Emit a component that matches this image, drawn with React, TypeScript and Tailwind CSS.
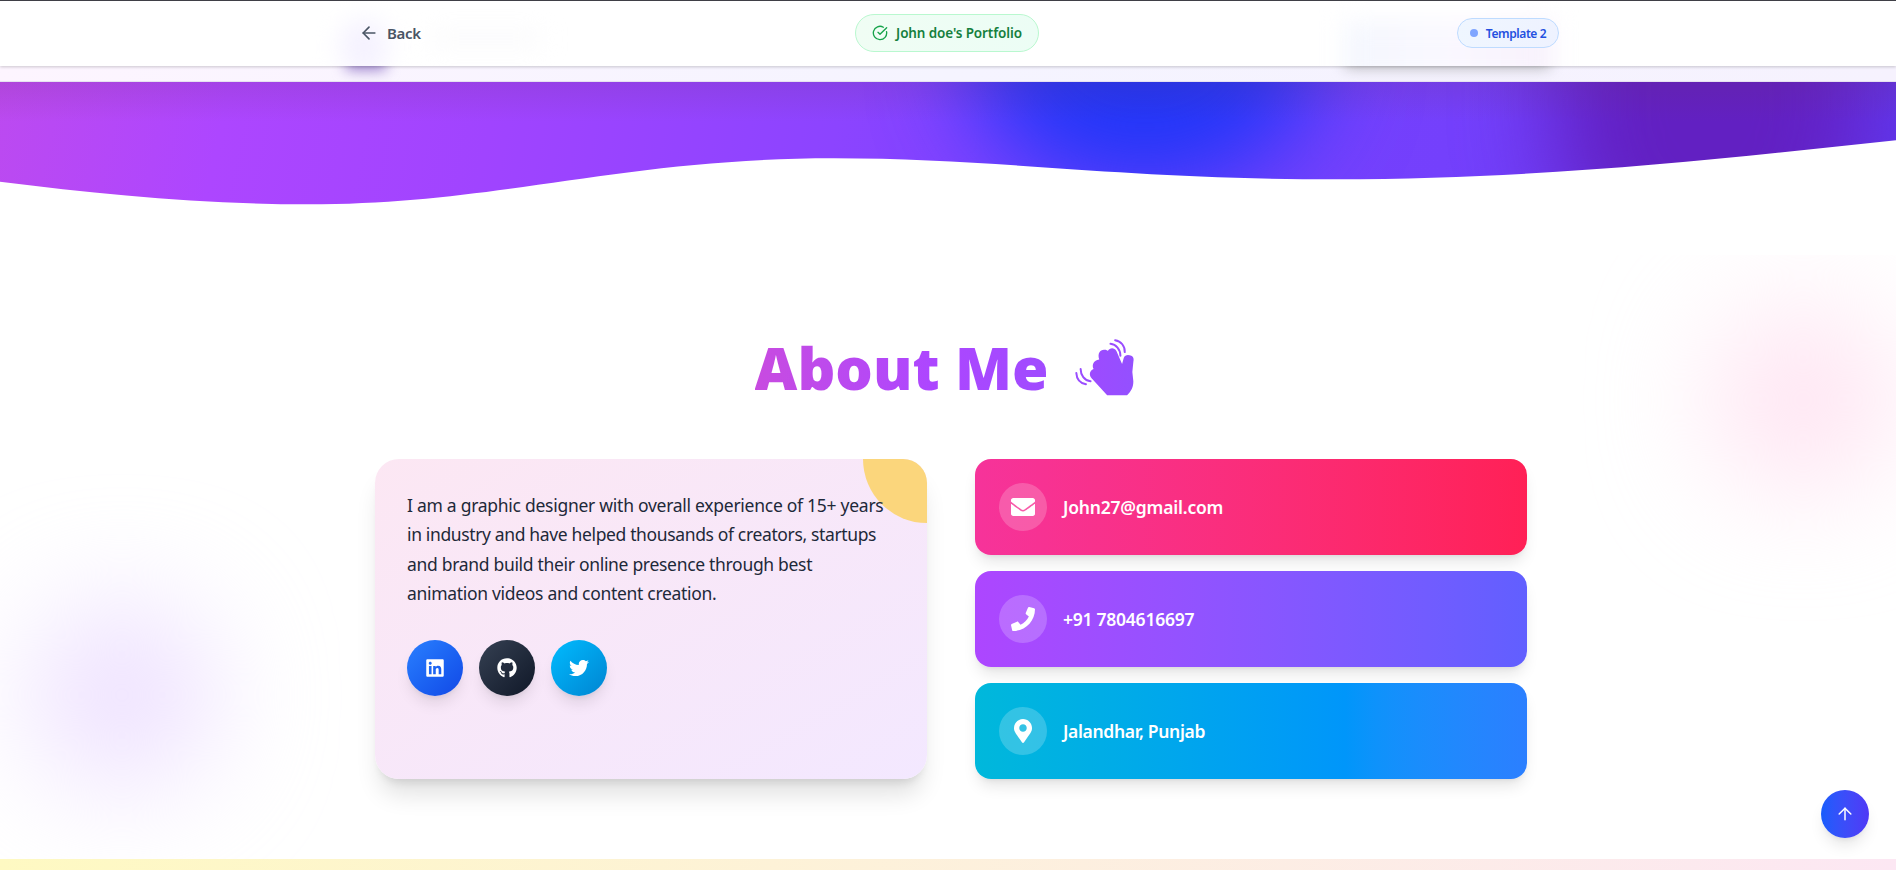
import React from "react";
import { ArrowLeft, ArrowUp, CircleCheckBig } from "lucide-react";
import { FaEnvelope, FaGithub, FaLinkedin, FaMapMarkerAlt, FaPhone, FaTwitter } from "react-icons/fa";

const socials = [
  { name: "LinkedIn", Icon: FaLinkedin, tone: "from-[#2b7fff] to-[#1447e6]" },
  { name: "GitHub", Icon: FaGithub, tone: "from-[#364153] to-[#101828]" },
  { name: "Twitter", Icon: FaTwitter, tone: "from-[#00bcff] to-[#0084d1]" },
];

const contacts = [
  { text: "John27@gmail.com", Icon: FaEnvelope, tone: "from-[#f6339a] to-[#ff2056]", tracking: "tracking-[-0.2px]" },
  { text: "+91 7804616697", Icon: FaPhone, tone: "from-[#ad46ff] to-[#615fff]", tracking: "tracking-[-0.25px]" },
  { text: "Jalandhar, Punjab", Icon: FaMapMarkerAlt, tone: "from-[#00b8db] via-[#0096fa] via-67% to-[#2b7fff]", tracking: "tracking-[-0.34px]" },
];

function Header() {
  return (
    <header className="relative z-20 h-[66px] border-t border-[#3f3f46] bg-white shadow-[0_1px_3px_rgba(0,0,0,0.2)]">
      <div className="pointer-events-none absolute inset-0 overflow-hidden">
        <div className="absolute left-[340px] top-[18px] h-14 w-12 rounded-full bg-[#f3efff]/80 blur-md" />
        <div className="absolute left-[430px] top-[34px] h-2 w-28 bg-[#f6f6f8] blur-md" />
        <div className="absolute left-[1345px] top-[20px] h-16 w-[208px] bg-linear-to-r from-[#f4f7fe] via-[#faf8ff] to-[#f8f1fc] blur-md" />
      </div>
      <div className="relative mx-auto grid h-full w-[1222px] grid-cols-3 items-center pb-0.5">
        <button className="ml-[22px] flex items-center gap-2 justify-self-start text-[15px] font-semibold tracking-[-0.3px] text-[#4a5565]">
          <ArrowLeft size={20} strokeWidth={2} />
          <span className="relative top-px">Back</span>
        </button>
        <div className="-ml-0.5 flex h-[38px] w-[184px] items-center justify-center gap-2 justify-self-center whitespace-nowrap rounded-full border border-[#b9f8cf] bg-linear-to-r from-[#f0fdf4] to-[#ecfdf5] text-[13.5px] font-semibold text-[#15803d]">
          <CircleCheckBig size={16} className="text-[#16a34a]" />
          <span className="relative top-px tracking-[-0.12px]">John doe's Portfolio</span>
        </div>
        <div className="flex h-[30px] w-[102px] items-center justify-center gap-2 justify-self-end whitespace-nowrap rounded-full border border-[#bedbff] bg-linear-to-r from-[#eff6ff] to-[#eef2ff] text-[12px] font-semibold text-[#2450e0]">
          <span className="size-2 rounded-full bg-[#7fa5ff]" />
          <span className="relative top-px tracking-[-0.4px]">Template 2</span>
        </div>
      </div>
    </header>
  );
}

function Hero() {
  return (
    <div>
      <div className="relative h-4 overflow-hidden border-b border-[#e6e2f0] bg-linear-to-r from-[#fdf5ff] via-[#f5f4ff] to-[#f6f2fe]">
        <div className="absolute -top-6 left-[346px] h-7 w-10 bg-[#9a80cc] blur-[7px]" />
        <div className="absolute -top-5 left-[1345px] h-[22px] w-[205px] bg-[#b8b8bd] blur-[7px]" />
      </div>
      <div className="relative h-[123px] overflow-hidden bg-[linear-gradient(102deg,#bc4af0_0%,#ad46ff_12%,#a044ff_26%,#8c44ff_44%,#7842ff_56%,#7440fc_76%,#6038f0_100%)]">
        <div className="absolute -top-[180px] left-[970px] h-[290px] w-[350px] rounded-[50%] bg-[#2036f8] blur-[48px]" />
        <div className="absolute -top-[160px] left-[1555px] h-[360px] w-[310px] rounded-[45%] bg-[#6220c2] blur-[46px]" />
        <div className="absolute inset-x-0 top-0 h-10 bg-linear-to-b from-[#6a3060]/15 to-transparent" />
        <svg viewBox="0 0 1896 123" preserveAspectRatio="none" className="absolute inset-0 h-full w-full" aria-hidden="true">
          <path
            fill="#fff"
            d="M0 99.7C100 112 200 122.3 308 122.3C500 122.3 620 76.3 834 76.3C1000 76.3 1120 97.3 1336 97.3C1540 97.3 1720 77 1896 58.3V124H0Z"
          />
        </svg>
      </div>
    </div>
  );
}

function WavingHand() {
  return (
    <svg viewBox="1030 53 184 174" className="relative top-[3px] h-[58px] w-[61px]" aria-hidden="true">
      <defs>
        <linearGradient id="hand" x1="0" x2="1">
          <stop offset="0" stopColor="#9d4bff" />
          <stop offset="1" stopColor="#9450ff" />
        </linearGradient>
      </defs>
      <path
        fill="url(#hand)"
        d="M1130 225L1083 174C1075 165 1076 151 1089 146C1083 134 1089 119 1106 117C1100 99 1109 87 1122 88C1128 88 1131 90 1132 92C1138 81 1152 81 1158 92L1175 131L1180 113C1184 102 1194 103 1203 106C1210 109 1211 116 1209 125L1206 155L1209 183C1209 201 1203 213 1190 225Z"
      />
      <g fill="none" stroke="#9a4dff" strokeWidth="6" strokeLinecap="round">
        <path d="M1140 70C1157 72 1170 87 1170 106" />
        <path d="M1154 59C1172 62 1184 77 1183 95" />
        <path d="M1050 146C1050 164 1061 181 1080 183" />
        <path d="M1037 158C1038 176 1049 189 1066 192" />
      </g>
    </svg>
  );
}

function BioCard() {
  return (
    <article className="relative h-[320px] rounded-3xl bg-linear-to-br from-[#fce7f3] to-[#f3e8ff] p-8 shadow-[0_20px_25px_-5px_rgba(0,0,0,0.12),0_8px_10px_-6px_rgba(0,0,0,0.12)]">
      <div className="absolute inset-0 overflow-hidden rounded-3xl">
        <div className="absolute -right-16 -top-16 size-32 rounded-full bg-[#fbd67c]" />
      </div>
      <p className="relative whitespace-nowrap text-[17.5px] leading-[29.25px] tracking-[-0.36px] text-[#1e2939]">
        <span className="tracking-[-0.27px]">I am a graphic designer with overall experience of 15+ years</span>
        <br />
        in industry and have helped thousands of creators, startups
        <br />
        <span className="tracking-[-0.31px]">and brand build their online presence through best</span>
        <br />
        <span className="tracking-[-0.31px]">animation videos and content creation.</span>
      </p>
      <div className="relative mt-8 flex gap-4">
        {socials.map(({ name, Icon, tone }) => (
          <a
            key={name}
            aria-label={name}
            className={`flex size-14 items-center justify-center rounded-full bg-linear-to-br text-white shadow-lg ${tone}`}
          >
            <Icon size={20} />
          </a>
        ))}
      </div>
    </article>
  );
}

function About() {
  return (
    <section className="relative h-[654px]">
      <div className="absolute inset-x-0 bottom-0 top-[50px] overflow-hidden">
        <div className="absolute left-[1717px] top-[59px] size-[172px] rounded-full bg-[#ffe0f0] blur-[60px]" />
        <div className="absolute left-[36px] top-[354px] size-[172px] rounded-full bg-[#ebdcff] blur-[60px]" />
      </div>
      <div className="relative ml-[375px] w-[1152px]">
        <div className="flex h-[254px] items-end justify-center gap-[26px] pb-[66px] pr-3">
          <h2 className="h-[60px] whitespace-nowrap bg-linear-to-r from-[#c84be0] via-[#ad46ff] via-60% to-[#a04bff] bg-clip-text text-[59px] font-black leading-[68px] text-transparent">
            About Me
          </h2>
          <WavingHand />
        </div>
        <div className="grid grid-cols-2 gap-12">
          <BioCard />
          <div className="flex flex-col gap-4">
            {contacts.map(({ text, Icon, tone, tracking }) => (
              <div key={text} className={`flex h-24 items-center gap-4 rounded-2xl bg-linear-to-r p-6 text-white shadow-lg ${tone}`}>
                <span className="flex size-12 items-center justify-center rounded-full bg-white/20">
                  <Icon size={24} />
                </span>
                <span className={`whitespace-nowrap text-[17.5px] font-semibold ${tracking}`}>{text}</span>
              </div>
            ))}
          </div>
        </div>
      </div>
    </section>
  );
}

export default function App() {
  return (
    <div className="relative h-[870px] overflow-hidden bg-white font-['Noto_Sans','Open_Sans',sans-serif]">
      <Header />
      <Hero />
      <About />
      <div className="h-[11px] bg-linear-to-r from-[#fef9c2] to-[#fce7f3]" />
      <button
        aria-label="Back to top"
        className="absolute left-[1821px] top-[790px] flex size-12 items-center justify-center rounded-full bg-linear-to-r from-[#155dfc] to-[#4f39f6] text-white shadow-lg"
      >
        <ArrowUp size={20} strokeWidth={1.8} />
      </button>
    </div>
  );
}
